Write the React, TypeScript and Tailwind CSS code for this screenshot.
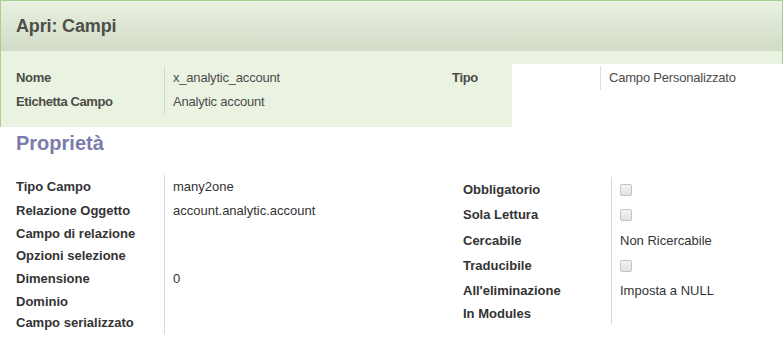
import React from "react";

type Row = { label: string; value?: string; check?: boolean; h: string };

const leftRows: Row[] = [
  { label: "Tipo Campo", value: "many2one", h: "h-[24px]" },
  { label: "Relazione Oggetto", value: "account.analytic.account", h: "h-[24px]" },
  { label: "Campo di relazione", h: "h-[22px]" },
  { label: "Opzioni selezione", h: "h-[22px]" },
  { label: "Dimensione", value: "0", h: "h-[24px]" },
  { label: "Dominio", h: "h-[21px]" },
  { label: "Campo serializzato", h: "h-[22px]" },
];

const rightRows: Row[] = [
  { label: "Obbligatorio", check: true, h: "h-[25px]" },
  { label: "Sola Lettura", check: true, h: "h-[26px]" },
  { label: "Cercabile", value: "Non Ricercabile", h: "h-[25px]" },
  { label: "Traducibile", check: true, h: "h-[25px]" },
  { label: "All'eliminazione", value: "Imposta a NULL", h: "h-[25px]" },
  { label: "In Modules", h: "h-[21px]" },
];

function Checkbox() {
  return (
    <span className="block h-[12px] w-[12px] rounded-[2px] border border-[#c4c4c4] bg-gradient-to-b from-[#f4f4f4] to-[#e2e2e2]" />
  );
}

function FieldTable({ rows }: { rows: Row[] }) {
  return (
    <div className="flex">
      {/* labels */}
      <div className="w-[148px]">
        {rows.map((r) => (
          <div
            key={r.label}
            className={`${r.h} flex items-center text-[13px] font-bold text-[#333]`}
          >
            {r.label}
          </div>
        ))}
      </div>
      {/* values */}
      <div className="border-l border-[#d8d8d8] pl-[8px]">
        {rows.map((r) => (
          <div
            key={r.label}
            className={`${r.h} flex items-center text-[13px] text-[#333]`}
          >
            {r.check ? <Checkbox /> : r.value}
          </div>
        ))}
      </div>
    </div>
  );
}

export default function App() {
  return (
    <div className="h-[356px] w-[783px] overflow-hidden bg-white font-['Liberation_Sans',Arial,sans-serif]">
      {/* green top block */}
      <div className="border-x border-t border-[#a9d08c] bg-[#eaf2e2]">
        <div className="flex h-[50px] items-center bg-gradient-to-b from-[#e9f1e2] to-[#d1dbc7] px-[15px]">
          <h1 className="text-[18px] font-bold tracking-[-0.15px] text-[#4d4f48]">
            Apri: Campi
          </h1>
        </div>

        <div className="flex">
          {/* left part */}
          <div className="flex w-[511px] pl-[15px] pt-[15px] pb-[13px]">
            <div className="w-[148px]">
              <div className="flex h-[24px] items-center text-[13px] font-bold tracking-[-0.3px] text-[#4a4d46]">
                Nome
              </div>
              <div className="flex h-[24px] items-center text-[13px] font-bold tracking-[-0.4px] text-[#4a4d46]">
                Etichetta Campo
              </div>
            </div>
            <div className="w-[288px] border-l border-[#d3dacb] pl-[8px]">
              <div className="flex h-[24px] items-center text-[13px] tracking-[-0.2px] text-[#4c4c4c]">
                x_analytic_account
              </div>
              <div className="flex h-[24px] items-center text-[13px] tracking-[-0.2px] text-[#4c4c4c]">
                Analytic account
              </div>
            </div>
            <div className="flex h-[24px] items-center text-[13px] font-bold tracking-[-0.3px] text-[#4a4d46]">
              Tipo
            </div>
          </div>

          {/* right white block */}
          <div className="-mr-px mt-[13px] flex flex-1 bg-white pt-[2px]">
            <div className="h-[24px] w-[88px]" />
            <div className="flex h-[24px] items-center border-l border-[#dcdcdc] pl-[8px] text-[13px] tracking-[-0.2px] text-[#4c4c4c]">
              Campo Personalizzato
            </div>
          </div>
        </div>
      </div>

      {/* properties */}
      <div className="px-[16px]">
        <h2 className="mt-[1px] h-[30px] text-[20px] font-bold leading-[30px] text-[#7c7bad]">
          Proprietà
        </h2>
        <div className="mt-[17px] flex">
          <div className="w-[447px]">
            <FieldTable rows={leftRows} />
          </div>
          <div className="mt-[2px]">
            <FieldTable rows={rightRows} />
          </div>
        </div>
      </div>
    </div>
  );
}
